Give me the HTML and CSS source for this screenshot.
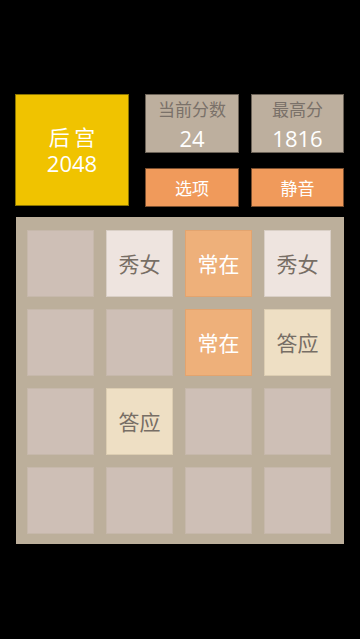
FILE: index.html
```html
<!DOCTYPE html>
<html lang="zh">
<head>
<meta charset="utf-8">
<title>后宫 2048</title>
<link rel="stylesheet" href="styles.css">
</head>
<body>
<div class="page">
  <div class="header">
    <div class="logo">
      <div class="logo-title">后 宫</div>
      <div class="logo-num">2048</div>
    </div>
    <div class="panel">
      <div class="score">
        <div class="score-label">当前分数</div>
        <div class="score-value">24</div>
      </div>
      <div class="score">
        <div class="score-label">最高分</div>
        <div class="score-value">1816</div>
      </div>
      <div class="btn">选项</div>
      <div class="btn">静音</div>
    </div>
  </div>
  <div class="board">
    <div class="cell"></div>
    <div class="cell t2">秀女</div>
    <div class="cell t8">常在</div>
    <div class="cell t2">秀女</div>
    <div class="cell"></div>
    <div class="cell"></div>
    <div class="cell t8">常在</div>
    <div class="cell t4">答应</div>
    <div class="cell"></div>
    <div class="cell t4">答应</div>
    <div class="cell"></div>
    <div class="cell"></div>
    <div class="cell"></div>
    <div class="cell"></div>
    <div class="cell"></div>
    <div class="cell"></div>
  </div>
</div>
</body>
</html>
```

FILE: styles.css
```css
html, body {
  margin: 0;
  padding: 0;
  background: #000;
}
body {
  width: 360px;
  height: 639px;
  overflow: hidden;
  font-family: "Open Sans", "Noto Sans CJK SC", sans-serif;
}
.page {
  padding: 94px 0 0 15px;
}
.header {
  display: flex;
  align-items: flex-start;
}
.logo {
  box-sizing: border-box;
  width: 114px;
  height: 112px;
  background: #f0c300;
  border: 1px solid #8a7400;
  color: #fff;
  display: flex;
  flex-direction: column;
  align-items: center;
  justify-content: center;
  margin-right: 16px;
}
.logo-title {
  font-family: "Noto Sans CJK SC", sans-serif;
  font-size: 21px;
  line-height: 27px;
}
.logo-num {
  font-size: 22px;
  line-height: 27px;
}
.panel {
  display: grid;
  grid-template-columns: 94px 93px;
  grid-template-rows: 59px 39px;
  column-gap: 12px;
  row-gap: 15px;
}
.score {
  box-sizing: border-box;
  background: #bdaf9e;
  border: 1px solid #6b6257;
  display: flex;
  flex-direction: column;
  align-items: center;
}
.score-label {
  font-family: "Noto Sans CJK SC", sans-serif;
  font-size: 17px;
  line-height: 22px;
  margin-top: 3px;
  color: #7a7169;
}
.score-value {
  font-size: 22px;
  line-height: 26px;
  margin-top: 5px;
  color: #fff;
}
.btn {
  box-sizing: border-box;
  background: #f09a5b;
  border: 1px solid #7a4e2e;
  color: #fff;
  font-family: "Noto Sans CJK SC", sans-serif;
  font-size: 17px;
  line-height: 1;
  display: flex;
  align-items: center;
  justify-content: center;
}
.board {
  box-sizing: border-box;
  width: 328px;
  height: 327px;
  margin: 10px 0 0 1px;
  background: #bcaf9b;
  padding: 13px 12px 10px 11px;
  display: grid;
  grid-template-columns: repeat(4, 67px);
  grid-template-rows: repeat(4, 67px);
  gap: 12px;
}
.cell {
  box-sizing: border-box;
  background: #cebfb6;
  border: 1px solid #c6b8ab;
  display: flex;
  align-items: center;
  justify-content: center;
  font-family: "Noto Sans CJK SC", sans-serif;
  font-size: 21px;
  line-height: 1;
  color: #776e65;
}
.t2 {
  background: #eee4df;
  border-color: #d9cfc6;
}
.t4 {
  background: #eedfc4;
  border-color: #dccdb2;
}
.t8 {
  background: #eeb07a;
  border-color: #e2a46f;
  color: #fff;
}
```
